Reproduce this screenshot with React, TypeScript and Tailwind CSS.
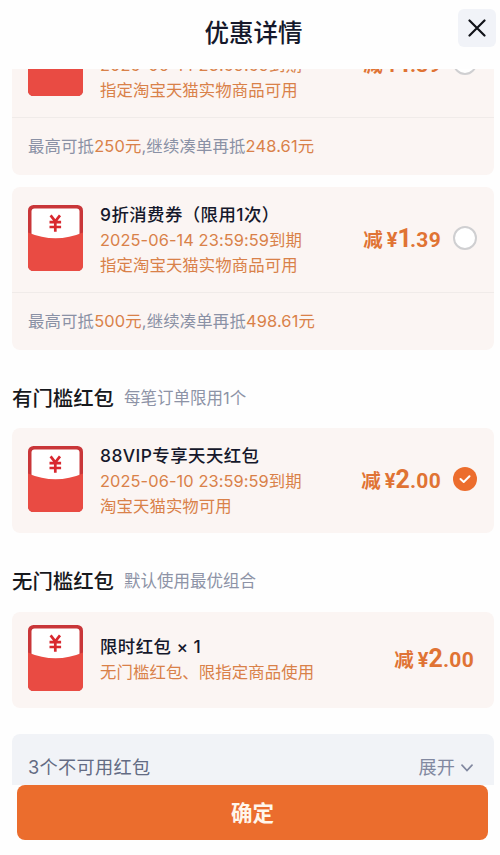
import React, { useState } from "react";
import cls from "clsx";

interface ICoupon {
  id: string;
  title: string;
  lines: string[];
  price: [string, string];
  selectable: boolean;
  limit?: string;
  rest?: string;
}

const consumeCoupons: ICoupon[] = [
  {
    id: "c95",
    title: "95折消费券（限用1次）",
    lines: ["2025-06-14 23:59:59到期", "指定淘宝天猫实物商品可用"],
    price: ["1", ".39"],
    selectable: true,
    limit: "250元",
    rest: "248.61元",
  },
  {
    id: "c90",
    title: "9折消费券（限用1次）",
    lines: ["2025-06-14 23:59:59到期", "指定淘宝天猫实物商品可用"],
    price: ["1", ".39"],
    selectable: true,
    limit: "500元",
    rest: "498.61元",
  },
];

const vipCoupon: ICoupon = {
  id: "vip",
  title: "88VIP专享天天红包",
  lines: ["2025-06-10 23:59:59到期", "淘宝天猫实物可用"],
  price: ["2", ".00"],
  selectable: true,
};

const freeCoupon: ICoupon = {
  id: "free",
  title: "限时红包 × 1",
  lines: ["无门槛红包、限指定商品使用"],
  price: ["2", ".00"],
  selectable: false,
};

function Envelope() {
  return (
    <svg className="w-[55px] h-[66px] shrink-0" viewBox="0 0 55 66" fill="none">
      <rect width="55" height="66" rx="5.5" fill="#c93639" />
      <path
        d="M3.5 6.5Q3.5 3.5 6.5 3.5H48.5Q51.5 3.5 51.5 6.5V34H3.5Z"
        fill="#fff"
      />
      <path
        d="M0 27.5Q27.5 39 55 27.5V60.5A5.5 5.5 0 0 1 49.5 66H5.5A5.5 5.5 0 0 1 0 60.5Z"
        fill="#e94b43"
      />
      <path
        d="M22.6 10.4L27.3 16.4L32 10.4M27.3 16.4V26.8M21.5 17.2H33.1M21.5 22H33.1"
        stroke="#d8282f"
        strokeWidth="2.7"
      />
    </svg>
  );
}

function Price({ price }: { price: [string, string] }) {
  const [yuan, cents] = price;
  return (
    <div className="flex items-baseline text-[#e07334] leading-7 whitespace-nowrap font-bold">
      <span className="text-[19.5px] mr-[4px]">减</span>
      <span className="font-['Roboto'] text-[20px]">¥</span>
      <span
        className={cls(
          "font-['Roboto'] text-[25px]",
          yuan === "1" && "tracking-[-2px]"
        )}
      >
        {yuan}
      </span>
      <span className="font-['Roboto'] text-[21px] tracking-[0.3px]">
        {cents}
      </span>
    </div>
  );
}

function Radio({ checked }: { checked: boolean }) {
  return (
    <div
      className={cls(
        "size-6 ml-3 rounded-full flex items-center justify-center",
        checked ? "bg-[#ec6d2d]" : "bg-white border-2 border-[#cfcfd1]"
      )}
    >
      {checked && (
        <svg className="w-3 h-3" viewBox="0 0 12 12" fill="none">
          <path
            d="M1.5 6L4.7 9L10.5 3.2"
            stroke="#fff"
            strokeWidth="2"
            strokeLinecap="round"
            strokeLinejoin="round"
          />
        </svg>
      )}
    </div>
  );
}

interface CouponCardProps {
  coupon: ICoupon;
  checked?: boolean;
  onSelect?: (id: string) => void;
}

function CouponCard({ coupon, checked = false, onSelect }: CouponCardProps) {
  return (
    <div
      className="bg-[#fbf5f3] rounded-lg shrink-0"
      onClick={() => onSelect?.(coupon.id)}
    >
      <div
        className={cls(
          "flex px-4",
          coupon.selectable ? "h-[105px] pt-[18px]" : "h-24 pt-[13px]"
        )}
      >
        <Envelope />
        <div
          className={cls(
            "ml-[17px] flex-1 whitespace-nowrap",
            coupon.selectable ? "-mt-[3px]" : "mt-[9px]"
          )}
        >
          <div className="text-[17.4px] leading-[26px] tracking-[0.45px] font-medium text-[#15182b]">
            {coupon.title}
          </div>
          {coupon.lines.map((line) => (
            <div
              key={line}
              className="text-[16.4px] leading-[24.5px] tracking-[0.08px] text-[#d98149]"
            >
              {line}
            </div>
          ))}
        </div>
        <div
          className={cls(
            "flex items-center h-[66px]",
            coupon.selectable ? "pr-px" : "pr-1"
          )}
        >
          <div className="pt-[3px]">
            <Price price={coupon.price} />
          </div>
          {coupon.selectable && <Radio checked={checked} />}
        </div>
      </div>
      {coupon.limit && (
        <div className="h-[58px] border-t border-[#f0ebe9] px-4 flex items-center text-[16.4px] tracking-[0.15px] text-[#8a91a5]">
          最高可抵<span className="text-[#d98149]">{coupon.limit}</span>
          ,继续凑单再抵
          <span className="text-[#d98149]">{coupon.rest}</span>
        </div>
      )}
    </div>
  );
}

function SectionTitle({ title, tip }: { title: string; tip: string }) {
  return (
    <div className="flex items-center h-8 pt-0.5 shrink-0">
      <div className="text-[20.4px] font-medium text-[#17181c]">{title}</div>
      <div className="ml-[10px] -mt-px text-[16.5px] text-[#8d93a6]">{tip}</div>
    </div>
  );
}

export default function App() {
  const [selected, setSelected] = useState("vip");

  return (
    <div className="w-[500px] h-[855px] bg-[#fefefe] overflow-hidden flex flex-col font-['Inter','Noto_Sans_CJK_SC',sans-serif]">
      <header className="h-[69px] shrink-0 grid grid-cols-[1fr_auto_1fr] items-start pl-[11px] pr-1">
        <div />
        <div className="text-[24.5px] leading-9 mt-[15px] font-medium text-[#15182b]">
          优惠详情
        </div>
        <button className="justify-self-end mt-[9px] size-[38px] rounded-md bg-[#f1f3f8] flex items-center justify-center">
          <svg className="size-[18px]" viewBox="0 0 18 18" fill="none">
            <path
              d="M1.5 1.5L16.5 16.5M16.5 1.5L1.5 16.5"
              stroke="#111319"
              strokeWidth="2.2"
              strokeLinecap="round"
            />
          </svg>
        </button>
      </header>
      <main className="h-[716px] shrink-0 overflow-hidden pl-3 pr-[6px] flex flex-col">
        <div className="-mt-[57px] flex flex-col gap-3">
          {consumeCoupons.map((coupon) => (
            <CouponCard
              key={coupon.id}
              coupon={coupon}
              checked={selected === coupon.id}
              onSelect={setSelected}
            />
          ))}
        </div>
        <div className="mt-8 flex flex-col gap-[14px]">
          <SectionTitle title="有门槛红包" tip="每笔订单限用1个" />
          <CouponCard
            coupon={vipCoupon}
            checked={selected === vipCoupon.id}
            onSelect={setSelected}
          />
        </div>
        <div className="mt-8 flex flex-col gap-[15px]">
          <SectionTitle title="无门槛红包" tip="默认使用最优组合" />
          <CouponCard coupon={freeCoupon} />
        </div>
        <div className="mt-[26px] h-[66px] pt-0.5 shrink-0 rounded-t-lg bg-[#f1f3f7] px-4 flex items-center justify-between text-[18.2px]">
          <span className="text-[#636b83] tracking-[0.3px]">
            3个不可用红包
          </span>
          <span className="flex items-center text-[#8188a0] pr-[5px]">
            展开
            <svg className="ml-[6px] w-3 h-2" viewBox="0 0 12 8" fill="none">
              <path
                d="M1 1.2L6 6.5L11 1.2"
                stroke="#8188a0"
                strokeWidth="1.7"
                strokeLinecap="round"
              />
            </svg>
          </span>
        </div>
      </main>
      <button className="ml-[17px] w-[471px] h-[55px] shrink-0 rounded-lg bg-[#eb6d2d] pt-px text-[21.5px] font-bold text-[#fff6ec]">
        确定
      </button>
    </div>
  );
}
